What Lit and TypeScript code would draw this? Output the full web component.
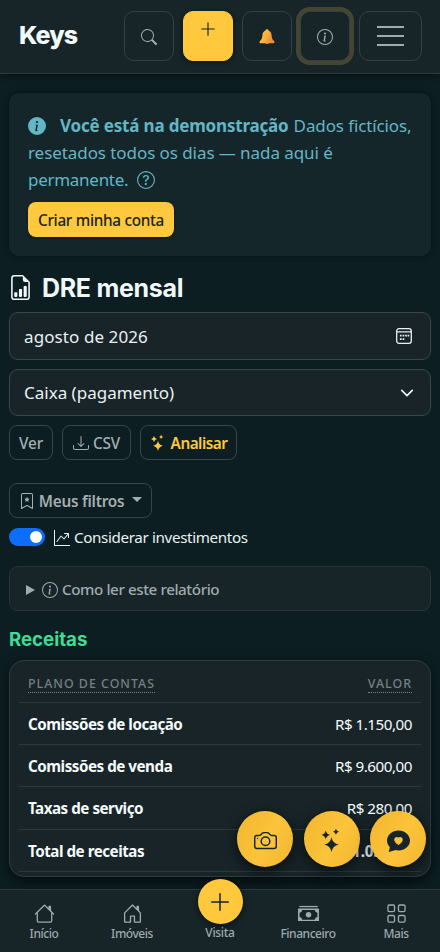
import { LitElement, html, css, svg } from "lit";
import { customElement } from "lit/decorators.js";

const icon = (cls: string, body: unknown, box = "0 0 16 16") =>
  html`<svg class="icon ${cls}" viewBox=${box} fill="currentColor" aria-hidden="true">${body}</svg>`;

const search = svg`<path d="M11.742 10.344a6.5 6.5 0 1 0-1.397 1.398h-.001q.044.06.098.115l3.85 3.85a1 1 0 0 0 1.415-1.414l-3.85-3.85a1 1 0 0 0-.115-.1zM12 6.5a5.5 5.5 0 1 1-11 0 5.5 5.5 0 0 1 11 0"/>`;
const plus = svg`<path d="M8 2a.5.5 0 0 1 .5.5v5h5a.5.5 0 0 1 0 1h-5v5a.5.5 0 0 1-1 0v-5h-5a.5.5 0 0 1 0-1h5v-5A.5.5 0 0 1 8 2"/>`;
const infoGlyph = "m8.93 6.588-2.29.287-.082.38.45.083c.294.07.352.176.288.469l-.738 3.468c-.194.897.105 1.319.808 1.319.545 0 1.178-.252 1.465-.598l.088-.416c-.2.176-.492.246-.686.246-.275 0-.375-.193-.304-.533zM9 4.5a1 1 0 1 1-2 0 1 1 0 0 1 2 0";
const ring = "M8 15A7 7 0 1 1 8 1a7 7 0 0 1 0 14m0 1A8 8 0 1 0 8 0a8 8 0 0 0 0 16";
const info = svg`<path d=${ring}/><path d=${infoGlyph}/>`;
const infoFill = svg`<path d="M8 16A8 8 0 1 0 8 0a8 8 0 0 0 0 16m.93-9.412-1 4.705c-.07.34.029.533.304.533.194 0 .487-.07.686-.246l-.088.416c-.287.346-.92.598-1.465.598-.703 0-1.002-.422-.808-1.319l.738-3.468c.064-.293.006-.399-.287-.47l-.451-.081.082-.381 2.29-.287zM8 5.5a1 1 0 1 1 0-2 1 1 0 0 1 0 2"/>`;
const question = svg`<path d=${ring}/><path d="M5.255 5.786a.237.237 0 0 0 .241.247h.825c.138 0 .248-.113.266-.25.09-.656.54-1.134 1.342-1.134.686 0 1.314.343 1.314 1.168 0 .635-.374.927-.965 1.371-.673.489-1.206 1.06-1.168 1.987l.003.217a.25.25 0 0 0 .25.246h.811a.25.25 0 0 0 .25-.25v-.105c0-.718.273-.927 1.01-1.486.609-.463 1.244-.977 1.244-2.056 0-1.511-1.276-2.241-2.673-2.241-1.267 0-2.655.59-2.75 2.286m1.557 5.763c0 .533.425.927 1.01.927.609 0 1.028-.394 1.028-.927 0-.552-.42-.94-1.029-.94-.584 0-1.009.388-1.009.94"/>`;
const report = svg`<path d="M10 13.5a.5.5 0 0 0 .5.5h1a.5.5 0 0 0 .5-.5v-6a.5.5 0 0 0-.5-.5h-1a.5.5 0 0 0-.5.5zm-2.5.5a.5.5 0 0 1-.5-.5v-4a.5.5 0 0 1 .5-.5h1a.5.5 0 0 1 .5.5v4a.5.5 0 0 1-.5.5zm-3 0a.5.5 0 0 1-.5-.5v-2a.5.5 0 0 1 .5-.5h1a.5.5 0 0 1 .5.5v2a.5.5 0 0 1-.5.5z"/><path d="M14 14V4.5L9.5 0H4a2 2 0 0 0-2 2v12a2 2 0 0 0 2 2h8a2 2 0 0 0 2-2M9.5 3A1.5 1.5 0 0 0 11 4.5h2V14a1 1 0 0 1-1 1H4a1 1 0 0 1-1-1V2a1 1 0 0 1 1-1h5.5z"/>`;
const calendar = svg`<rect x=".7" y=".7" width="14.6" height="14.6" rx="2.3" fill="none" stroke="currentColor" stroke-width="1.3"/><path d="M1 3.3h14v1.3H1zM6.6 6.8h1.7v1.7H6.6zM9.2 6.8h1.7v1.7H9.2zM11.6 6.8h1.6v1.7h-1.6zM3.9 6.8h1.7v1.7H3.9zM3.9 10.3h1.7V12H3.9zM6.6 10.3h1.7V12H6.6z"/>`;
const chevron = svg`<path fill="none" stroke="currentColor" stroke-width="2" stroke-linecap="round" stroke-linejoin="round" d="m2 5 6 6 6-6"/>`;
const download = svg`<path d="M.5 9.9a.5.5 0 0 1 .5.5v2.5a1 1 0 0 0 1 1h12a1 1 0 0 0 1-1v-2.5a.5.5 0 0 1 1 0v2.5a2 2 0 0 1-2 2H2a2 2 0 0 1-2-2v-2.5a.5.5 0 0 1 .5-.5"/><path d="M7.646 11.854a.5.5 0 0 0 .708 0l3-3a.5.5 0 0 0-.708-.708L8.5 10.293V1.5a.5.5 0 0 0-1 0v8.793L5.354 8.146a.5.5 0 1 0-.708.708z"/>`;
const stars = svg`<path d="M8 5.7Q8.8 10 13 10.8Q8.8 11.6 8 16Q7.200 11.600 3 10.800Q7.200 10 8 5.700Z"/><path d="M4 1.100Q4.500 3.600 7 4.100Q4.500 4.600 4 7.100Q3.500 4.600 1 4.100Q3.500 3.600 4 1.100Z"/><path d="M11.100-.2Q11.500 1.500 13.200 1.900Q11.500 2.300 11.100 4Q10.700 2.300 9 1.900Q10.700 1.500 11.100-.2Z"/>`;
const bookmark = svg`<path d="M7.84 4.1a.178.178 0 0 1 .32 0l.634 1.285a.18.18 0 0 0 .134.098l1.42.206c.145.021.204.2.098.303L9.42 6.993a.18.18 0 0 0-.051.158l.242 1.414a.178.178 0 0 1-.258.187l-1.27-.668a.18.18 0 0 0-.165 0l-1.27.668a.178.178 0 0 1-.257-.187l.242-1.414a.18.18 0 0 0-.05-.158l-1.03-1.001a.178.178 0 0 1 .098-.303l1.42-.206a.18.18 0 0 0 .134-.098z"/><path d="M2 2a2 2 0 0 1 2-2h8a2 2 0 0 1 2 2v13.5a.5.5 0 0 1-.777.416L8 13.101l-5.223 2.815A.5.5 0 0 1 2 15.5zm2-1a1 1 0 0 0-1 1v12.566l4.723-2.482a.5.5 0 0 1 .554 0L13 14.566V2a1 1 0 0 0-1-1z"/>`;
const graph = svg`<path fill-rule="evenodd" d="M0 0h1v15h15v1H0zm10 3.5a.5.5 0 0 1 .5-.5h4a.5.5 0 0 1 .5.5v4a.5.5 0 0 1-1 0V4.9l-3.613 4.417a.5.5 0 0 1-.74.037L7.06 6.767l-3.656 5.027a.5.5 0 0 1-.808-.588l4-5.5a.5.5 0 0 1 .758-.06l2.609 2.61L13.445 4H10.5a.5.5 0 0 1-.5-.5"/>`;
const house = svg`<path d="M8.707 1.5a1 1 0 0 0-1.414 0L.646 8.146a.5.5 0 0 0 .708.708L2 8.207V13.5A1.5 1.5 0 0 0 3.5 15h9a1.5 1.5 0 0 0 1.5-1.5V8.207l.646.647a.5.5 0 0 0 .708-.708L13 5.793V2.5a.5.5 0 0 0-.5-.5h-1a.5.5 0 0 0-.5.5v1.293zM13 7.207V13.5a.5.5 0 0 1-.5.5h-9a.5.5 0 0 1-.5-.5V7.207l5-5z"/>`;
const houseDoor = svg`<path d="M8.354 1.146a.5.5 0 0 0-.708 0l-6 6A.5.5 0 0 0 1.5 7.5v7a.5.5 0 0 0 .5.5h4.5a.5.5 0 0 0 .5-.5v-4h2v4a.5.5 0 0 0 .5.5H14a.5.5 0 0 0 .5-.5v-7a.5.5 0 0 0-.146-.354L13 5.793V2.5a.5.5 0 0 0-.5-.5h-1a.5.5 0 0 0-.5.5v1.293zM2.5 14V7.707l5.5-5.5 5.5 5.5V14H10v-4a.5.5 0 0 0-.5-.5h-3a.5.5 0 0 0-.5.5v4z"/>`;
const cash = svg`<path d="M1 2.2h14v1H1z"/><path fill-rule="evenodd" d="M0 4.2h16v9.6H0zM3.2 5.3A2.3 2.3 0 0 1 1.2 7.4v3.2a2.3 2.3 0 0 1 2 2.1h9.6a2.3 2.3 0 0 1 2-2.1V7.4a2.3 2.3 0 0 1-2-2.1z"/><circle cx="8" cy="9" r="2.1"/>`;
const grid = svg`<path d="M1 2.5A1.5 1.5 0 0 1 2.5 1h3A1.5 1.5 0 0 1 7 2.5v3A1.5 1.5 0 0 1 5.5 7h-3A1.5 1.5 0 0 1 1 5.5zM2.5 2a.5.5 0 0 0-.5.5v3a.5.5 0 0 0 .5.5h3a.5.5 0 0 0 .5-.5v-3a.5.5 0 0 0-.5-.5zm6.5.5A1.5 1.5 0 0 1 10.5 1h3A1.5 1.5 0 0 1 15 2.5v3A1.5 1.5 0 0 1 13.5 7h-3A1.5 1.5 0 0 1 9 5.5zm1.5-.5a.5.5 0 0 0-.5.5v3a.5.5 0 0 0 .5.5h3a.5.5 0 0 0 .5-.5v-3a.5.5 0 0 0-.5-.5zM1 10.5A1.5 1.5 0 0 1 2.5 9h3A1.5 1.5 0 0 1 7 10.5v3A1.5 1.5 0 0 1 5.5 15h-3A1.5 1.5 0 0 1 1 13.5zm1.5-.5a.5.5 0 0 0-.5.5v3a.5.5 0 0 0 .5.5h3a.5.5 0 0 0 .5-.5v-3a.5.5 0 0 0-.5-.5zm6.5.5A1.5 1.5 0 0 1 10.5 9h3a1.5 1.5 0 0 1 1.5 1.5v3a1.5 1.5 0 0 1-1.5 1.5h-3A1.5 1.5 0 0 1 9 13.5zm1.5-.5a.5.5 0 0 0-.5.5v3a.5.5 0 0 0 .5.5h3a.5.5 0 0 0 .5-.5v-3a.5.5 0 0 0-.5-.5z"/>`;
const camera = svg`<path d="M15 12a1 1 0 0 1-1 1H2a1 1 0 0 1-1-1V6a1 1 0 0 1 1-1h1.172a3 3 0 0 0 2.12-.879l.83-.828A1 1 0 0 1 6.827 3h2.344a1 1 0 0 1 .707.293l.828.828A3 3 0 0 0 12.828 5H14a1 1 0 0 1 1 1zM2 4a2 2 0 0 0-2 2v6a2 2 0 0 0 2 2h12a2 2 0 0 0 2-2V6a2 2 0 0 0-2-2h-1.172a2 2 0 0 1-1.414-.586l-.828-.828A2 2 0 0 0 9.172 2H6.828a2 2 0 0 0-1.414.586l-.828.828A2 2 0 0 1 3.172 4z"/><path d="M8 11a2.5 2.5 0 1 1 0-5 2.5 2.5 0 0 1 0 5m0 1a3.5 3.5 0 1 0 0-7 3.5 3.5 0 0 0 0 7M3 6.5a.5.5 0 1 1-1 0 .5.5 0 0 1 1 0"/>`;
const chatHeart = svg`<path d="M8 15c4.418 0 8-3.134 8-7s-3.582-7-8-7-8 3.134-8 7c0 1.76.743 3.37 1.97 4.6-.097 1.016-.417 2.13-.771 2.966-.079.186.074.394.273.362 2.256-.37 3.597-.938 4.18-1.234A9 9 0 0 0 8 15m0-9.007c1.664-1.711 5.825 1.283 0 5.132-5.825-3.85-1.664-6.843 0-5.132"/>`;
const bell = svg`
  <defs><linearGradient id="brass" x1="0" x2="1" y1="0" y2=".5">
    <stop offset="0" stop-color="#ffc84a"/><stop offset=".5" stop-color="#ffb43c"/><stop offset="1" stop-color="#e88b3f"/>
  </linearGradient></defs>
  <path fill="#e8913c" d="M6.3 13.2h3.4a1.7 1.9 0 0 1-3.4 0z"/>
  <path fill="url(#brass)" d="M8 .2c.9 0 1.5.6 1.5 1.4 1.9.7 2.9 2.3 3.1 4.6.2 2.4.5 3.9 2 5.3.7.7.9 1.1.9 1.7 0 .7-.5 1-1.2 1H1.7c-.7 0-1.2-.3-1.2-1 0-.6.2-1 .9-1.7 1.5-1.4 1.8-2.9 2-5.3.2-2.3 1.2-3.9 3.1-4.6C6.5.8 7.1.2 8 .2z"/>`;

const rows = [
  { name: "Comissões de locação", value: "R$ 1.150,00", cls: "r1" },
  { name: "Comissões de venda", value: "R$ 9.600,00", cls: "r2" },
  { name: "Taxas de serviço", value: "R$ 280,00", cls: "r3" },
  { name: "Total de receitas", value: "R$ 11.030,00", cls: "r4 total" },
];

@customElement("app-root")
export class AppRoot extends LitElement {
  static styles = css`
    :host {
      display: block; position: relative; height: 952px; overflow: hidden;
      background: #0c1e22; color: #e9f1f2;
      font: 17px/27px "Noto Sans", "Open Sans", sans-serif;
    }
    * { box-sizing: border-box; }
    .icon { display: block; flex: none; width: 16px; height: 16px; overflow: visible; }
    header {
      height: 74px; padding: 11px 18px 0 19px; display: flex; align-items: flex-start;
      background: #172428; border-bottom: 1px solid #2b383c; gap: 8.7px;
      box-shadow: 0 2px 6px #0006;
    }
    .brand { font: 800 25px/49px Inter, sans-serif; letter-spacing: -.9px; flex: 1; color: #f2fbfc; }
    .tool {
      width: 50px; height: 50px; border: 1px solid #344246; border-radius: 10px; color: #a5b0b3;
      display: flex; align-items: center; justify-content: center; padding-top: 2px;
    }
    .tool.add { background: #ffc83d; border-color: #ffc83d; color: #17222a; align-items: flex-start; padding-top: 8px; box-shadow: 0 1px 4px #0008; }
    .tool.add .icon { width: 18px; height: 18px; }
    .tool.focus { box-shadow: 0 0 0 4px #454531; background: #172428; }
    .tool.menu { width: 63px; flex-direction: column; gap: 7px; padding: 0; }
    .bar { width: 27px; height: 2px; background: #a0abae; }
    main { padding: 19px 9px 0; }
    .alert {
      height: 163px; border-radius: 10px; padding: 19px 10px 0 19px; background: #15262a; color: #63b6c5;
      box-shadow: 0 0 6px #0007;
    }
    .line { height: 27px; display: flex; align-items: center; white-space: nowrap; }
    .line .icon { width: 18px; height: 18px; }
    .line b { margin: 0 5px 0 14px; letter-spacing: -.18px; }
    .l1 span { letter-spacing: -.11px; }
    .l2 span { letter-spacing: -.07px; }
    .l3 span { letter-spacing: -.28px; margin-right: 9px; }
    .cta {
      margin-top: 9px; width: 146px; height: 35px; border-radius: 8px; background: #ffc83d; color: #1c2421;
      font-size: 15.3px; font-weight: 500; line-height: 36px; letter-spacing: -.3px; text-align: center; box-shadow: 0 1px 3px #0008; white-space: nowrap;
    }
    .title { height: 57px; padding: 5px 0 0; display: flex; align-items: center; gap: 10px; color: #f0f8f9; }
    .title .icon { width: 25px; height: 25px; margin: 0 -1px 0 -1px; }
    h1 { margin: 2px 0 0; font: 700 25px/34px Inter, sans-serif; letter-spacing: -.3px; }
    .field {
      height: 48px; border: 1px solid #37474a; border-radius: 9px; background: #182428;
      display: flex; align-items: center; justify-content: space-between; padding: 0 18px 0 14px; margin-top: -1px;
      letter-spacing: .09px;
    }
    .field + .field { margin-top: 9px; height: 47px; padding-right: 17px; letter-spacing: 0; }
    .field .chev { width: 14px; height: 14px; margin-right: -1px; }
    .actions { display: flex; gap: 9px; margin-top: 9px; }
    .btn {
      height: 35px; border: 1px solid #37464a; border-radius: 8px; color: #a4afb1; font-size: 15.3px; font-weight: 500;
      display: flex; align-items: center; justify-content: center; gap: 4px; white-space: nowrap; padding-top: 1px; letter-spacing: -.1px;
    }
    .ver { width: 44px; } .csv { width: 69px; } .ai { width: 97px; color: #ffc83d; font-weight: 600; gap: 5px; letter-spacing: -.5px; }
    .filters { width: 143px; margin-top: 23px; font-weight: 600; letter-spacing: -.22px; }
    .caret { border: 5px solid transparent; border-top-color: currentColor; border-bottom: 0; margin: -3px 0 0 4px; }
    .switchrow { height: 38px; display: flex; align-items: center; font-size: 15.2px; padding-top: 1px; letter-spacing: -.36px; }
    .switch { width: 36px; height: 18px; border-radius: 9px; background: #0d6efd; padding: 3px; display: flex; justify-content: flex-end; margin: -2px 9px 0 0; }
    .knob { width: 12px; height: 12px; border-radius: 50%; background: #fff; }
    .switchrow .icon { margin-right: 4px; }
    .help {
      margin-top: 10px; height: 45px; border: 1px solid #26363a; border-radius: 9px; background: #172428; color: #a0abae;
      display: flex; align-items: center; padding: 2px 0 0 16px; font-size: 15.2px; font-weight: 500; letter-spacing: -.42px;
    }
    .tri { border: 5px solid transparent; border-left: 9px solid currentColor; border-right: 0; margin-right: 7px; }
    .help .icon { margin-right: 4px; }
    h2 { margin: 14px 0 0; height: 35px; font: 700 18.7px/29px Inter, sans-serif; letter-spacing: -.03px; color: #3fdc97; }
    .table {
      height: 217px; border: 1px solid #2c3b3f; border-radius: 15px; background: #182428; padding: 3px 9px 0;
      box-shadow: 0 5px 14px #0009;
    }
    .row { display: flex; justify-content: space-between; align-items: center; padding: 2px 9px 0; border-bottom: 1px solid #2b393c; font-size: 15.2px; color: #f5fbfb; height: 42px; white-space: nowrap; letter-spacing: -.48px; }
    .row.head { height: 39px; color: #738083; font-size: 12.4px; letter-spacing: 1px; font-weight: 500; }
    .head span { line-height: 16px; border-bottom: 1px dotted #738083; }
    .row.r3 { height: 43px; padding-top: 0; }
    .name { font-weight: 700; }
    .total { font-weight: 700; }
    .total .value { letter-spacing: -.1px; }
    nav {
      position: absolute; left: 0; right: 0; bottom: 0; height: 63px; border-top: 1px solid #2b383c; background: #172428;
      display: grid; grid-template-columns: repeat(5, 1fr); color: #9eaaad; font-size: 12px; line-height: 16px; font-weight: 500; letter-spacing: -.45px;
    }
    .tab { display: flex; flex-direction: column; align-items: center; padding-top: 13px; }
    .tab .icon { width: 21px; height: 21px; margin-bottom: 2px; }
    .tab.visit { padding-top: 0; letter-spacing: -.3px; }
    .visitdot { width: 45px; height: 45px; border-radius: 50%; margin: -11px 0 1px; background: #ffc83d; color: #17222a; display: grid; place-items: center; box-shadow: 0 2px 6px #0008; }
    .visitdot .icon { width: 24px; height: 24px; margin: 0; }
    .fabs { position: absolute; left: 237px; top: 811px; display: flex; gap: 10.5px; }
    .fab { width: 56px; height: 56px; border-radius: 50%; display: grid; place-items: center; color: #172529; background: linear-gradient(120deg, #f0b62f, #fcc43a 55%, #f0b530); box-shadow: 0 4px 14px #000a; }
    .fab .icon { width: 23px; height: 23px; margin-top: 2px; }
  `;

  render() {
    return html`
      <header>
        <div class="brand">Keys</div>
        <div class="tool">${icon("", search)}</div>
        <div class="tool add">${icon("", plus)}</div>
        <div class="tool">${icon("", bell)}</div>
        <div class="tool focus">${icon("", info)}</div>
        <div class="tool menu"><i class="bar"></i><i class="bar"></i><i class="bar"></i></div>
      </header>
      <main>
        <section class="alert">
          <div class="line l1">${icon("", infoFill)}<b>Você está na demonstração</b><span>Dados fictícios,</span></div>
          <div class="line l2"><span>resetados todos os dias — nada aqui é</span></div>
          <div class="line l3"><span>permanente.</span>${icon("", question)}</div>
          <div class="cta">Criar minha conta</div>
        </section>
        <div class="title">${icon("", report)}<h1>DRE mensal</h1></div>
        <div class="field"><span>agosto de 2026</span>${icon("", calendar)}</div>
        <div class="field"><span>Caixa (pagamento)</span>${icon("chev", chevron)}</div>
        <div class="actions">
          <div class="btn ver">Ver</div>
          <div class="btn csv">${icon("", download)}<span>CSV</span></div>
          <div class="btn ai">${icon("", stars)}<span>Analisar</span></div>
        </div>
        <div class="btn filters">${icon("", bookmark)}<span>Meus filtros</span><i class="caret"></i></div>
        <div class="switchrow"><div class="switch"><i class="knob"></i></div>${icon("", graph)}<span>Considerar investimentos</span></div>
        <div class="help"><i class="tri"></i>${icon("", info)}<span>Como ler este relatório</span></div>
        <h2>Receitas</h2>
        <section class="table">
          <div class="row head"><span>PLANO DE CONTAS</span><span>VALOR</span></div>
          ${rows.map((r) => html`<div class="row ${r.cls}"><span class="name">${r.name}</span><span class="value">${r.value}</span></div>`)}
        </section>
      </main>
      <nav>
        <div class="tab">${icon("", house)}<span>Início</span></div>
        <div class="tab">${icon("", houseDoor)}<span>Imóveis</span></div>
        <div class="tab visit"><div class="visitdot">${icon("", plus)}</div><span>Visita</span></div>
        <div class="tab">${icon("", cash)}<span>Financeiro</span></div>
        <div class="tab">${icon("", grid)}<span>Mais</span></div>
      </nav>
      <div class="fabs">
        <div class="fab">${icon("", camera)}</div>
        <div class="fab">${icon("", stars)}</div>
        <div class="fab">${icon("", chatHeart)}</div>
      </div>
    `;
  }
}
